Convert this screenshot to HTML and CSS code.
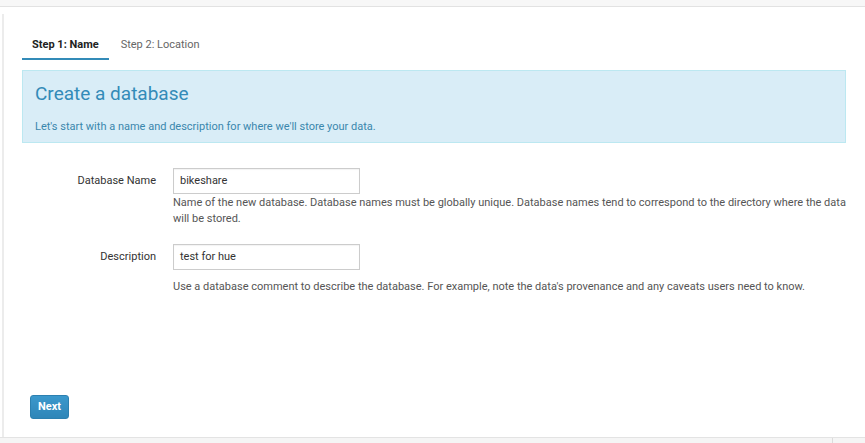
FILE: index.html
```html
<!DOCTYPE html>
<html>
<head>
<meta charset="utf-8">
<link rel="stylesheet" href="styles.css">
</head>
<body>
<div class="topbar"></div>
<div class="main">
  <div class="rail"></div>
  <div class="content">
    <ul class="tabs">
      <li class="tab active">Step 1: Name</li>
      <li class="tab">Step 2: Location</li>
    </ul>
    <div class="info">
      <h1 class="info-title">Create a database</h1>
      <p class="info-text">Let's start with a name and description for where we'll store your data.</p>
    </div>
    <div class="form">
      <label class="label">Database Name</label>
      <div class="control">
        <div class="input">bikeshare</div>
        <p class="help help-first">Name of the new database. Database names must be globally unique. Database names tend to correspond to the directory where the data will be stored.</p>
      </div>
      <label class="label label-second">Description</label>
      <div class="control control-second">
        <div class="input">test for hue</div>
        <p class="help help-second">Use a database comment to describe the database. For example, note the data's provenance and any caveats users need to know.</p>
      </div>
    </div>
    <div class="actions">
      <button class="btn">Next</button>
    </div>
  </div>
</div>
<div class="bottombar">
  <div class="bottom-left"></div>
  <div class="bottom-right"></div>
</div>
</body>
</html>
```

FILE: styles.css
```css
* { box-sizing: border-box; }
html, body { margin: 0; padding: 0; }
body {
  width: 865px;
  height: 443px;
  overflow: hidden;
  display: flex;
  flex-direction: column;
  font-family: Roboto, "Liberation Sans", sans-serif;
  font-size: 11px;
  color: #333;
  background: #fff;
}
.topbar {
  height: 7px;
  background: #f7f7f7;
  border-bottom: 1px solid #e2e2e2;
}
.main {
  flex: 1;
  display: flex;
  padding-left: 2px;
  min-height: 0;
}
.rail {
  width: 2px;
  margin-top: 7px;
  background: #ececec;
}
.content {
  flex: 1;
  display: flex;
  flex-direction: column;
  padding: 24px 19px 18px 18px;
}
.tabs {
  list-style: none;
  margin: 0;
  padding: 0;
  display: flex;
  gap: 2px;
}
.tab {
  padding: 6px 10px 5px;
  line-height: 16px;
  font-size: 11px;
  color: #666;
  border-bottom: 2px solid transparent;
}
.tab.active {
  font-weight: bold;
  color: #222;
  border-bottom-color: #338bb8;
}
.info {
  margin-top: 10px;
  background: #d9edf7;
  border: 1px solid #bce8f1;
  padding: 11px 12px 7px;
}
.info-title {
  margin: 0;
  font-size: 19px;
  line-height: 24px;
  font-weight: normal;
  color: #338bb8;
}
.info-text {
  margin: 13px 0 0;
  line-height: 16px;
  font-size: 11px;
  color: #3a87ad;
}
.form {
  margin-top: 25px;
  display: grid;
  grid-template-columns: 134px 1fr;
  column-gap: 17px;
}
.label {
  text-align: right;
  line-height: 26px;
  color: #333;
}
.label-second, .control-second { margin-top: 17px; }
.input {
  width: 187px;
  height: 26px;
  border: 1px solid #ccc;
  padding: 0 6px;
  line-height: 24px;
  color: #333;
  box-shadow: inset 0 1px 1px rgba(0,0,0,0.05);
}
.help {
  margin: 0;
  line-height: 16px;
  color: #555;
}
.help-first { margin-top: 1px; }
.help-second { margin-top: 9px; }
.actions {
  margin-top: auto;
}
.btn {
  margin-left: 8px;
  font-family: Roboto, "Liberation Sans", sans-serif;
  font-size: 11px;
  font-weight: bold;
  color: #fff;
  background: linear-gradient(#3b98cc, #2f86b8);
  border: 1px solid #2c80b0;
  border-radius: 3px;
  height: 24px;
  padding: 0 7px;
  line-height: 22px;
}
.bottombar {
  height: 6px;
  background: #f5f5f5;
  border-top: 1px solid #e3e3e3;
  display: flex;
}
.bottom-left {
  width: 833px;
  border-right: 1px solid #dcdcdc;
}
.bottom-right { flex: 1; }
```
